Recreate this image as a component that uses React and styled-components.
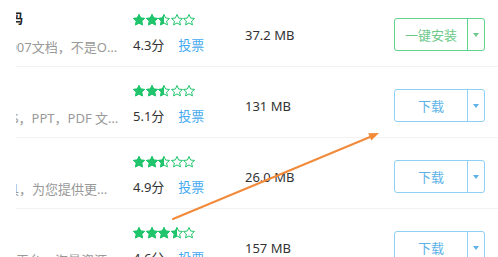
import React, { useId } from 'react';
import styled, { createGlobalStyle } from 'styled-components';

const GlobalStyle = createGlobalStyle`
  html, body {
    margin: 0;
    padding: 0;
    background: #fff;
  }
  body {
    font-family: "Noto Sans", "Noto Sans CJK SC", sans-serif;
  }
`;

const Page = styled.div`
  position: relative;
  width: 498px;
  height: 257px;
  overflow: hidden;
  background: #fff;
`;

const List = styled.div`
  margin-top: -4px;
  padding-left: 16px;
`;

const Row = styled.div`
  display: flex;
  align-items: center;
  height: 71px;
  box-sizing: border-box;
  padding-top: 7px;
  border-bottom: 1px solid #f2f2f2;
`;

const Info = styled.div`
  width: 104px;
  display: flex;
  flex-direction: column;
  gap: 9px;
  margin-top: -4px;
`;

const Clip = styled.div`
  overflow: hidden;
  height: 20px;
`;

const Title = styled.div`
  margin-left: -${p => p.$cut}px;
  font-size: 13px;
  line-height: 20px;
  font-weight: bold;
  color: #222;
  white-space: nowrap;
`;

const Desc = styled.div`
  margin-left: -${p => p.$cut}px;
  width: ${p => 103 + p.$cut}px;
  font-size: 13px;
  line-height: 20px;
  color: #999;
  white-space: nowrap;
  overflow: hidden;
  text-overflow: ellipsis;
`;

const Rating = styled.div`
  width: 112px;
  margin-left: 13px;
  display: flex;
  flex-direction: column;
  gap: 9px;
`;

const Stars = styled.div`
  display: flex;
  gap: 0.6px;
`;

const Score = styled.div`
  display: flex;
  gap: 14px;
  font-size: 13px;
  line-height: 20px;
  color: #333;
`;

const Vote = styled.a`
  color: #42a9f0;
  text-decoration: none;
`;

const Size = styled.div`
  width: 149px;
  font-size: 13px;
  color: #333;
`;

const Btn = styled.div`
  display: flex;
  width: 91px;
  height: 33px;
  box-sizing: border-box;
  border: 1px solid ${p => p.$color};
  border-radius: 3px;
  color: ${p => p.$text};
  font-size: 13px;
`;

const BtnLabel = styled.div`
  flex: 1;
  display: flex;
  align-items: center;
  justify-content: center;
`;

const BtnDrop = styled.div`
  width: 16px;
  border-left: 1px solid ${p => p.$color};
  display: flex;
  align-items: center;
  justify-content: center;

  &::after {
    content: '';
    border-left: 3.5px solid transparent;
    border-right: 3.5px solid transparent;
    border-top: 4px solid ${p => p.$text};
  }
`;

const Arrow = styled.svg`
  position: absolute;
  left: 0;
  top: 0;
  pointer-events: none;
`;

const STAR = 'M12 1l3.3 7.1 7.7.8-5.8 5.2 1.7 7.7L12 17.9l-6.9 3.9 1.7-7.7L1 8.9l7.7-.8z';

const Star = ({ fill }) => {
  const id = useId();
  return (
    <svg width="12" height="12" viewBox="0 0 24 24">
      <defs>
        <clipPath id={id}>
          <rect x="0" y="0" width={24 * fill} height="24" />
        </clipPath>
      </defs>
      <path d={STAR} fill="#fff" stroke="#1fc46b" strokeWidth="2" strokeLinejoin="round" />
      {fill > 0 && <path d={STAR} fill="#1fc46b" stroke="#1fc46b" strokeWidth="2" strokeLinejoin="round" clipPath={`url(#${id})`} />}
    </svg>
  );
};

const green = { color: '#5fd38c', text: '#6cc98a' };
const blue = { color: '#8ed0f6', text: '#5db2e8' };

const apps = [
  { title: '码', titleCut: 6, desc: '2007文档，不是Office文件', descCut: 14, stars: 2.5, score: '4.3分', size: '37.2 MB', btn: '一键安装', tone: green },
  { title: '', titleCut: 0, desc: 'XLS，PPT，PDF 文件查看', descCut: 19, stars: 2.5, score: '5.1分', size: '131 MB', btn: '下载', tone: blue },
  { title: '', titleCut: 0, desc: '工具，为您提供更好的服务', descCut: 23, stars: 2.5, score: '4.9分', size: '26.0 MB', btn: '下载', tone: blue },
  { title: '', titleCut: 0, desc: '平台，海量资源免费下载', descCut: 0, stars: 3.5, score: '4.6分', size: '157 MB', btn: '下载', tone: blue },
];

export default function App() {
  return (
    <Page>
      <GlobalStyle />
      <List>
        {apps.map((a, i) => (
          <Row key={i}>
            <Info>
              <Clip>
                <Title $cut={a.titleCut}>{a.title || '\u00a0'}</Title>
              </Clip>
              <Clip>
                <Desc $cut={a.descCut}>{a.desc}</Desc>
              </Clip>
            </Info>
            <Rating>
              <Stars>
                {[0, 1, 2, 3, 4].map(k => (
                  <Star key={k} fill={Math.max(0, Math.min(1, a.stars - k))} />
                ))}
              </Stars>
              <Score>
                <span>{a.score}</span>
                <Vote>投票</Vote>
              </Score>
            </Rating>
            <Size>{a.size}</Size>
            <Btn $color={a.tone.color} $text={a.tone.text}>
              <BtnLabel>{a.btn}</BtnLabel>
              <BtnDrop $color={a.tone.color} $text={a.tone.text} />
            </Btn>
          </Row>
        ))}
      </List>
      <Arrow width="498" height="257" viewBox="0 0 498 257">
        <line x1="173" y1="219" x2="370" y2="137" stroke="#f28a3a" strokeWidth="2" strokeLinecap="round" />
        <polygon points="379,133 371.3,140.6 368.2,133.2" fill="#f28a3a" />
      </Arrow>
    </Page>
  );
}
